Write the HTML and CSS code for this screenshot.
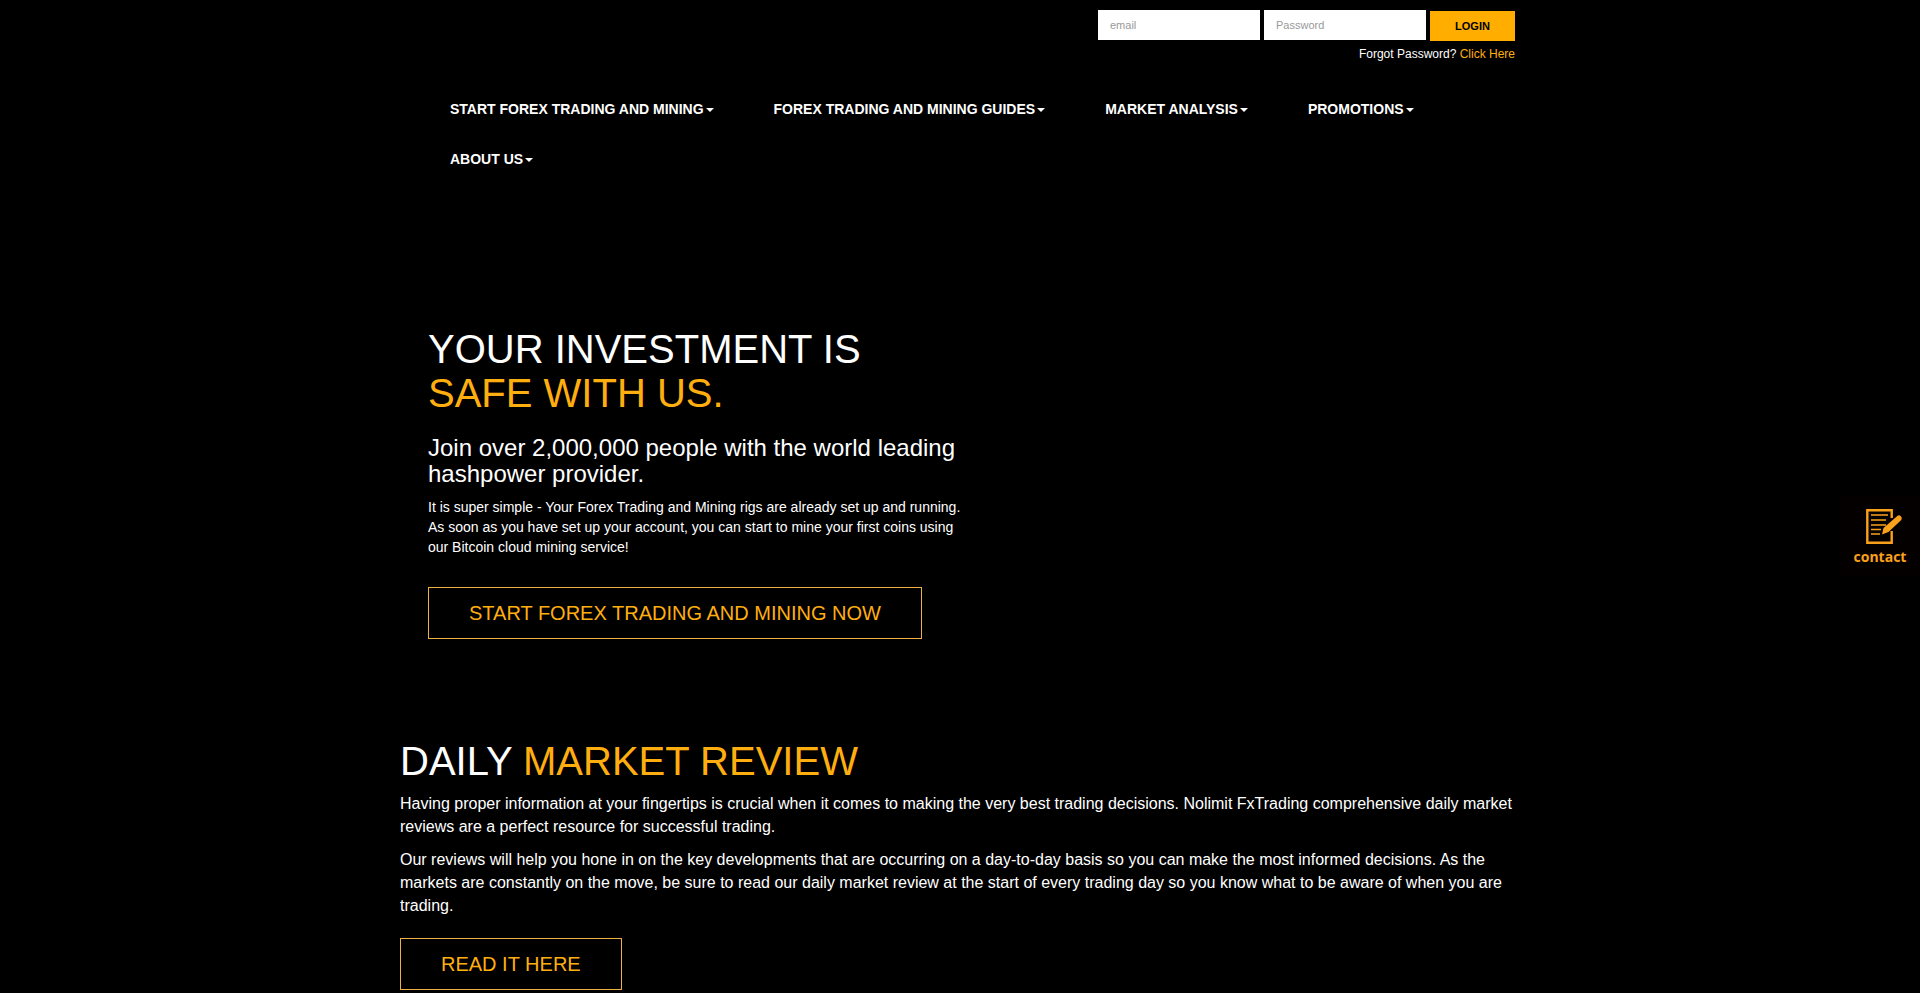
FILE: index.html
```html
<!DOCTYPE html>
<html lang="en">
<head>
<meta charset="utf-8">
<meta name="viewport" content="width=device-width, initial-scale=1">
<title>Nolimit FxTrading</title>
<link rel="stylesheet" href="styles.css">
</head>
<body>
<header class="container header">
  <form class="login">
    <input class="login-field" type="email" placeholder="email" aria-label="email">
    <input class="login-field" type="password" placeholder="Password" aria-label="Password">
    <button class="login-button" type="submit">LOGIN</button>
  </form>
  <p class="forgot">Forgot Password? <a class="accent" href="#">Click Here</a></p>
  <nav>
    <ul class="menu">
      <li><a class="menu-link" href="#">START FOREX TRADING AND MINING<span class="caret"></span></a></li>
      <li><a class="menu-link" href="#">FOREX TRADING AND MINING GUIDES<span class="caret"></span></a></li>
      <li><a class="menu-link" href="#">MARKET ANALYSIS<span class="caret"></span></a></li>
      <li><a class="menu-link" href="#">PROMOTIONS<span class="caret"></span></a></li>
      <li><a class="menu-link" href="#">ABOUT US<span class="caret"></span></a></li>
    </ul>
  </nav>
</header>
<main class="container">
  <section class="hero">
    <h1 class="title">YOUR INVESTMENT IS<br><span class="accent">SAFE WITH US.</span></h1>
    <h2 class="subtitle">Join over 2,000,000 people with the world leading hashpower provider.</h2>
    <p class="hero-text">It is super simple - Your Forex Trading and Mining rigs are already set up and running. As soon as you have set up your account, you can start to mine your first coins using our Bitcoin cloud mining service!</p>
    <a class="outline-button" href="#">START FOREX TRADING AND MINING NOW</a>
  </section>
  <section class="review">
    <h2 class="title">DAILY <span class="accent">MARKET REVIEW</span></h2>
    <div class="review-text">
      <p>Having proper information at your fingertips is crucial when it comes to making the very best trading decisions. Nolimit FxTrading comprehensive daily market reviews are a perfect resource for successful trading.</p>
      <p>Our reviews will help you hone in on the key developments that are occurring on a day-to-day basis so you can make the most informed decisions. As the markets are constantly on the move, be sure to read our daily market review at the start of every trading day so you know what to be aware of when you are trading.</p>
    </div>
    <a class="outline-button" href="#">READ IT HERE</a>
  </section>
</main>
<a class="contact" href="#">
  <svg class="contact-icon" viewBox="0 0 36 36" aria-hidden="true">
    <path d="M25.700 9V1.300H1.300V33.700H25.700V22" fill="none" stroke="currentColor" stroke-width="2.400"/>
    <path d="M5 6h17M5 11h15M5 16h15M5 20.500h10M5 25h9" fill="none" stroke="currentColor" stroke-width="1.700"/>
    <path d="M16 25.500l1.500-6.500L31 7.200q2-1.700 3.800 0t.2 4L22.500 23z" fill="currentColor"/>
  </svg>
  contact
</a>
</body>
</html>
```
FILE: styles.css
```css
* {
  box-sizing: border-box;
}

body {
  margin: 0;
  background: #000;
  color: #fff;
  font-family: "Liberation Sans", Arial, sans-serif;
  font-size: 14px;
  line-height: 20px;
}

a {
  color: inherit;
  text-decoration: none;
}

h1, h2, p, ul {
  margin: 0;
}

.accent {
  color: #ffae10;
}

.container {
  max-width: 1120px;
  margin: 0 auto;
}

.header {
  padding-top: 10px;
}

.login {
  display: flex;
  justify-content: flex-end;
  align-items: flex-end;
  gap: 4px;
  padding-right: 5px;
}

.login-field {
  width: 162px;
  height: 30px;
  margin-bottom: 1px;
  padding: 0 12px;
  border: 0;
  background: #fff;
  color: #333;
  font: 11px "Liberation Sans", Arial, sans-serif;
}

.login-field::placeholder {
  color: #999;
}

.login-button {
  width: 85px;
  height: 30px;
  padding: 0;
  border: 0;
  background: #ffae00;
  color: #000;
  font: bold 11px "Liberation Sans", Arial, sans-serif;
}

.forgot {
  padding: 3px 5px 0 0;
  font-size: 12px;
  text-align: right;
}

.menu {
  display: flex;
  flex-wrap: wrap;
  padding: 20px 0 0 20px;
  list-style: none;
}

.menu-link {
  display: flex;
  align-items: center;
  gap: 2px;
  padding: 15px 30px;
  font-weight: bold;
}

.caret {
  margin-top: 1px;
  border-top: 4px solid;
  border-left: 4px solid transparent;
  border-right: 4px solid transparent;
}

.hero {
  max-width: 568px;
  padding: 143px 0 0 28px;
}

.title {
  font-size: 40px;
  font-weight: normal;
  line-height: 44px;
}

.subtitle {
  margin: 20px 0 10px;
  font-size: 24px;
  font-weight: normal;
  line-height: 26px;
}

.hero-text {
  margin-bottom: 30px;
}

.outline-button {
  display: inline-block;
  padding: 11px 40px;
  border: 1px solid #f0b143;
  color: #ffae10;
  font-size: 20px;
  line-height: 28px;
  vertical-align: top;
}

.review {
  padding: 100px 0 20px;
}

.review-text {
  display: grid;
  gap: 10px;
  padding: 9px 0 21px;
  font-size: 16px;
  line-height: 23px;
}

.contact {
  position: fixed;
  top: 50%;
  right: 0;
  display: flex;
  flex-direction: column;
  align-items: center;
  width: 80px;
  height: 80px;
  padding-top: 12px;
  background: #050000;
  color: #f9a11b;
  font: bold 14px/24px "Open Sans", sans-serif;
}

.contact-icon {
  width: 36px;
  height: 36px;
  margin-left: 8px;
}
```
